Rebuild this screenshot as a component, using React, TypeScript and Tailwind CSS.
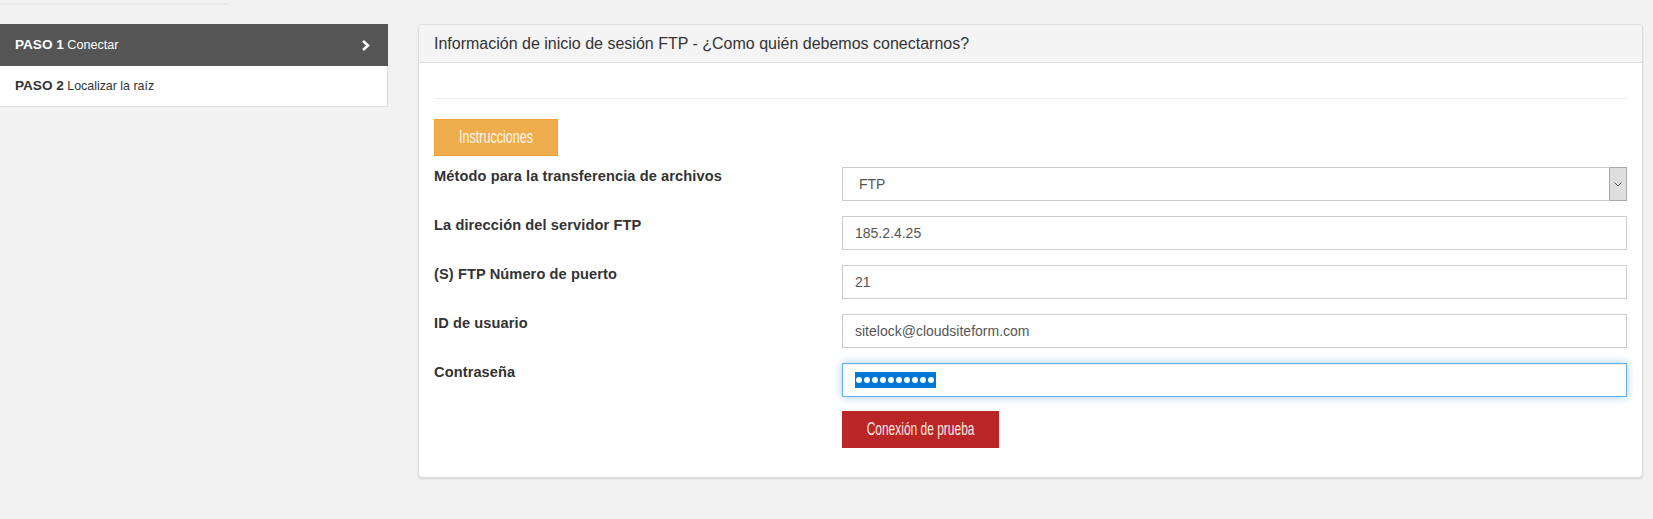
import React from "react";

const labelCls = "w-[408px] shrink-0 text-[14.6px] font-bold text-[#333] leading-[19px] tracking-[0.1px]";

const Row = ({ label, children }: { label: string; children: React.ReactNode }) => (
  <div className="flex mb-[15px]">
    <div className={labelCls}>{label}</div>
    <div className="flex-1">{children}</div>
  </div>
);

const inputCls =
  "h-[34px] w-full border border-[#ccc] bg-white px-[12px] flex items-center text-[14px] text-[#555]";

const Condensed = ({ children, scale }: { children: React.ReactNode; scale: string }) => (
  <span className={"inline-block whitespace-nowrap " + scale} style={{ fontFamily: '"Liberation Sans", Arial, sans-serif' }}>
    {children}
  </span>
);

export default function App() {
  return (
    <div
      className="w-[1653px] h-[519px] bg-[#f2f2f2] overflow-hidden"
      style={{ fontFamily: '"Liberation Sans", Arial, sans-serif' }}
    >
      <div className="h-[3px]" />
      <div className="h-[2px] w-[228px] bg-[#e8e8e8]" />
      <div className="flex mt-[19px]">
        {/* Sidebar */}
        <div className="w-[388px] shrink-0">
          <div className="h-[42px] bg-[#555555] text-white flex items-center justify-between pl-[15px] pr-[17px]">
            <span className="text-[12.6px]">
              <span className="text-[13.6px] font-bold">PASO 1</span> Conectar
            </span>
            <svg width="10" height="11" viewBox="0 0 10 11">
              <path d="M2 1 L7 5.5 L2 10" fill="none" stroke="white" strokeWidth="2.6" strokeLinejoin="miter" />
            </svg>
          </div>
          <div className="h-[41px] bg-white border-b border-r border-[#dcdcdc] text-[#333] flex items-center pl-[15px]">
            <span className="text-[12.4px]">
              <span className="text-[13.6px] font-bold">PASO 2</span> Localizar la raíz
            </span>
          </div>
        </div>

        {/* Panel */}
        <div className="ml-[30px] w-[1225px] h-[454px] bg-white border border-[#dddddd] rounded-[4px] shadow-[0_1px_2px_rgba(0,0,0,0.12)] overflow-hidden">
          <div className="h-[38px] bg-[#f4f4f4] border-b border-[#dddddd] px-[15px] flex items-center text-[16px] text-[#333]">
            Información de inicio de sesión FTP - ¿Como quién debemos conectarnos?
          </div>
          <div className="px-[15px]">
            <div className="h-[35px]" />
            <div className="h-px bg-[#eeeeee]" />
            <div className="mt-[20px] mb-[11px]">
              <button className="h-[37px] w-[124px] bg-[#f0ad4e] border border-[#eea23a] text-[#fff6e8] text-[19px] flex items-center justify-center overflow-hidden">
                <Condensed scale="scale-x-[0.66]">Instrucciones</Condensed>
              </button>
            </div>

            <Row label="Método para la transferencia de archivos">
              <div className={inputCls + " relative pl-[16px]"}>
                FTP
                <div className="absolute right-[-1px] top-[-1px] bottom-[-1px] w-[18px] bg-[#dedede] border border-[#a9a9a9] flex items-center justify-center">
                  <svg width="8" height="5" viewBox="0 0 8 5">
                    <path d="M0.5 0.5 L4 4 L7.5 0.5" fill="none" stroke="#555" strokeWidth="1" />
                  </svg>
                </div>
              </div>
            </Row>
            <Row label="La dirección del servidor FTP">
              <div className={inputCls}>185.2.4.25</div>
            </Row>
            <Row label="(S) FTP Número de puerto">
              <div className={inputCls}>21</div>
            </Row>
            <Row label="ID de usuario">
              <div className={inputCls}>sitelock@cloudsiteform.com</div>
            </Row>
            <div className="flex mb-[14px]">
              <div className={labelCls}>Contraseña</div>
              <div className="flex-1">
                <div className="h-[34px] w-full border border-[#66afe9] bg-white px-[12px] flex items-center shadow-[inset_0_1px_1px_rgba(0,0,0,0.075),0_0_8px_rgba(102,175,233,0.6)]">
                  <span className="bg-[#0078d7] h-[16px] flex items-center pl-[1px]" aria-label="••••••••••">
                    {Array.from({ length: 10 }).map((_, i) => (
                      <span key={i} className="w-[6px] h-[6px] rounded-full bg-white mr-[2px]" />
                    ))}
                  </span>
                </div>
              </div>
            </div>
            <div className="flex">
              <div className="w-[408px] shrink-0" />
              <button className="h-[37px] w-[157px] bg-[#b92625] text-[#ffe9e6] text-[19px] flex items-center justify-center overflow-hidden">
                <Condensed scale="scale-x-[0.63]">Conexión de prueba</Condensed>
              </button>
            </div>
          </div>
        </div>
      </div>
    </div>
  );
}
